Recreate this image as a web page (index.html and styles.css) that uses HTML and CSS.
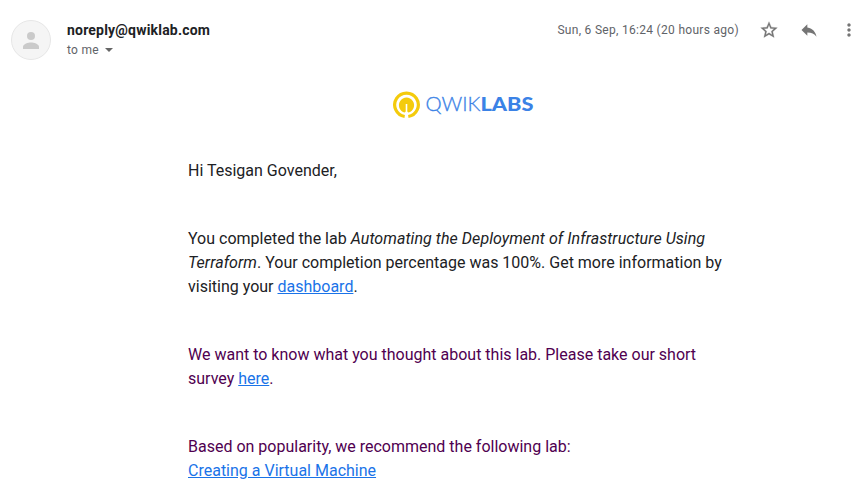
FILE: index.html
```html
<!DOCTYPE html>
<html lang="en">
<head>
<meta charset="utf-8">
<title>Qwiklabs message</title>
<link rel="stylesheet" href="styles.css">
</head>
<body>
<header class="header">
  <svg class="avatar" viewBox="0 0 40 40">
    <circle cx="20" cy="20" r="19.5" fill="#f5f5f5" stroke="#e6e6e6"/>
    <circle cx="20" cy="16" r="4" fill="#cacaca"/>
    <path d="M12 29v-2.2c0-2.8 5.3-4.3 8-4.3s8 1.500 8 4.300V29z" fill="#cacaca"/>
  </svg>
  <div class="sender">
    <div class="name">noreply@qwiklab.com</div>
    <div class="to">to me<span class="caret"></span></div>
  </div>
  <div class="date">Sun, 6 Sep, 16:24 (20 hours ago)</div>
  <div class="actions">
    <svg class="icon star" viewBox="0 0 24 24"><path d="M22 9.240l-7.190-.62L12 2 9.190 8.630 2 9.240l5.460 4.730L5.820 21 12 17.270 18.180 21l-1.630-7.030L22 9.240zM12 15.400l-3.760 2.270 1-4.280-3.320-2.880 4.380-.38L12 6.100l1.710 4.040 4.380.38-3.320 2.880 1 4.280L12 15.400z"/></svg>
    <svg class="icon" viewBox="0 0 24 24"><path d="M10 9V5l-7 7 7 7v-4.100c5 0 8.500 1.600 11 5.100-1-5-4-10-11-11z"/></svg>
    <svg class="icon" viewBox="0 0 24 24"><path d="M12 8c1.100 0 2-.9 2-2s-.9-2-2-2-2 .9-2 2 .9 2 2 2zm0 2c-1.100 0-2 .9-2 2s.9 2 2 2 2-.9 2-2-.9-2-2-2zm0 6c-1.100 0-2 .9-2 2s.9 2 2 2 2-.9 2-2-.9-2-2-2z"/></svg>
  </div>
</header>
<main class="message">
  <svg class="logo" viewBox="0 0 142 28">
    <path d="M11.700 25.500A11.800 11.800 0 1 1 15.300 25.500" fill="none" stroke="#f4cb0c" stroke-width="3.200"/>
    <path d="M11.700 21.600A7.600 7.600 0 1 1 15.300 21.600L14.300 20.500V13H12.700V20.500Z" fill="#f4cb0c"/>
    <text class="logo-light" x="32.500" y="20.400" textLength="55" lengthAdjust="spacingAndGlyphs">QWIK</text>
    <text class="logo-heavy" x="87.500" y="20.400" textLength="53" lengthAdjust="spacingAndGlyphs">LABS</text>
  </svg>
  <p>Hi Tesigan Govender,</p>
  <p>You completed the lab <em>Automating the Deployment of Infrastructure Using Terraform</em>. Your completion percentage was 100%. Get more information by visiting your <a href="#">dashboard</a>.</p>
  <p class="quoted">We want to know what you thought about this lab. Please take our short survey <a href="#">here</a>.</p>
  <p class="quoted">Based on popularity, we recommend the following lab:<br><a href="#">Creating a Virtual Machine</a></p>
</main>
</body>
</html>
```
FILE: styles.css
```css
body {
  margin: 0;
  height: 502px;
  overflow: hidden;
  background: #fff;
  color: #202124;
  font-family: Roboto, "Liberation Sans", sans-serif;
}

.header {
  display: flex;
  height: 71px;
  padding: 20px 0 0 11px;
  box-sizing: border-box;
}

.avatar {
  width: 40px;
  height: 40px;
}

.sender {
  flex: 1;
  margin-left: 16px;
}

.name {
  font-size: 14px;
  font-weight: 700;
  line-height: 20px;
  letter-spacing: 0.2px;
}

.to {
  display: flex;
  align-items: center;
  color: #5f6368;
  font-size: 12px;
  line-height: 20px;
  letter-spacing: 0.3px;
}

.caret {
  margin-left: 6px;
  border: 4px solid transparent;
  border-top-color: #666;
  border-bottom: 0;
}

.date {
  color: #5f6368;
  font-size: 12px;
  line-height: 20px;
  letter-spacing: 0.3px;
}

.actions {
  display: flex;
  gap: 20px;
  margin: 0 7px 0 20px;
}

.icon {
  flex: none;
  width: 20px;
  height: 20px;
  fill: #757575;
}

.star {
  stroke: #757575;
  stroke-width: 0.3;
}

.message {
  width: 550px;
  margin-left: 188px;
  font-size: 16px;
  line-height: 24px;
}

.logo {
  display: block;
  width: 142px;
  height: 28px;
  margin: 20px 0 40px 205px;
}

.logo-light,
.logo-heavy {
  fill: #3b82e6;
  font-family: Lato, sans-serif;
  font-size: 19px;
}

.logo-light {
  font-weight: 300;
  stroke: #3b82e6;
  stroke-width: 0.3;
}

.logo-heavy {
  font-weight: 900;
}

.message p {
  margin: 0 0 44px;
}

.message em {
  letter-spacing: 0.06px;
}

.message .quoted {
  color: #500050;
}

.message a {
  color: #1a73e8;
}
```
